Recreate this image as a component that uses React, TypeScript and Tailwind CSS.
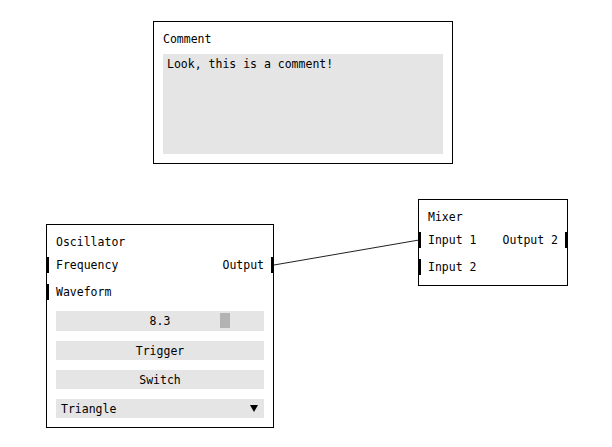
import React from 'react'

const font = "font-['DejaVu_Sans_Mono',monospace] text-[11.5px] leading-[14px] text-black"

function Port({ side }: { side: 'left' | 'right' }) {
  return (
    <span
      className={
        side === 'left'
          ? 'absolute left-[-1px] top-0 h-[16px] w-[3px] bg-black'
          : 'absolute right-[-1px] top-0 h-[16px] w-[3px] bg-black'
      }
    />
  )
}

function Row({ left, right }: { left?: string; right?: string }) {
  return (
    <div className="relative flex h-[16px] items-center justify-between px-[9px]">
      {left && <Port side="left" />}
      <span>{left}</span>
      <span>{right}</span>
      {right && <Port side="right" />}
    </div>
  )
}

function CommentNode() {
  return (
    <div className="absolute left-[153px] top-[21px] flex w-[300px] flex-col border border-black bg-white px-[9px] pt-[10px] pb-[9px]">
      <div className="h-[14px]">Comment</div>
      <div className="mt-[8px] h-[100px] bg-[#e5e5e5] px-[4px] py-[3px]">Look, this is a comment!</div>
    </div>
  )
}

function OscillatorNode() {
  return (
    <div className="absolute left-[46px] top-[224px] flex w-[228px] flex-col border border-black bg-white pt-[10px] pb-[9px]">
      <div className="h-[14px] px-[9px]">Oscillator</div>
      <div className="mt-[8px]">
        <Row left="Frequency" right="Output" />
      </div>
      <div className="mt-[11px]">
        <Row left="Waveform" />
      </div>
      <div className="mx-[9px] mt-[11px] flex flex-col gap-[10px]">
        <div className="relative flex h-[20px] items-center justify-center bg-[#e5e5e5]">
          <span>8.3</span>
          <span className="absolute left-[164px] top-[2px] h-[15px] w-[10px] bg-[#b3b3b3]" />
        </div>
        <button className="h-[19px] bg-[#e5e5e5] text-center">Trigger</button>
        <button className="h-[19px] bg-[#e5e5e5] text-center">Switch</button>
        <div className="flex h-[19px] items-center justify-between bg-[#e5e5e5] pl-[5px] pr-[6px]">
          <span>Triangle</span>
          <svg width="8" height="7" viewBox="0 0 8 7">
            <path d="M0 0 H8 L4 7 Z" fill="black" />
          </svg>
        </div>
      </div>
    </div>
  )
}

function MixerNode() {
  return (
    <div className="absolute left-[418px] top-[199px] flex w-[150px] flex-col border border-black bg-white pt-[10px] pb-[10px]">
      <div className="h-[14px] px-[9px]">Mixer</div>
      <div className="mt-[8px]">
        <Row left="Input 1" right="Output 2" />
      </div>
      <div className="mt-[11px]">
        <Row left="Input 2" />
      </div>
    </div>
  )
}

export default function App() {
  return (
    <div className={`relative h-[447px] w-[612px] overflow-hidden bg-white ${font}`}>
      <svg className="absolute left-0 top-0" width="612" height="447">
        <line x1="274" y1="265" x2="419" y2="240" stroke="#222" strokeWidth="1" />
      </svg>
      <CommentNode />
      <OscillatorNode />
      <MixerNode />
    </div>
  )
}
